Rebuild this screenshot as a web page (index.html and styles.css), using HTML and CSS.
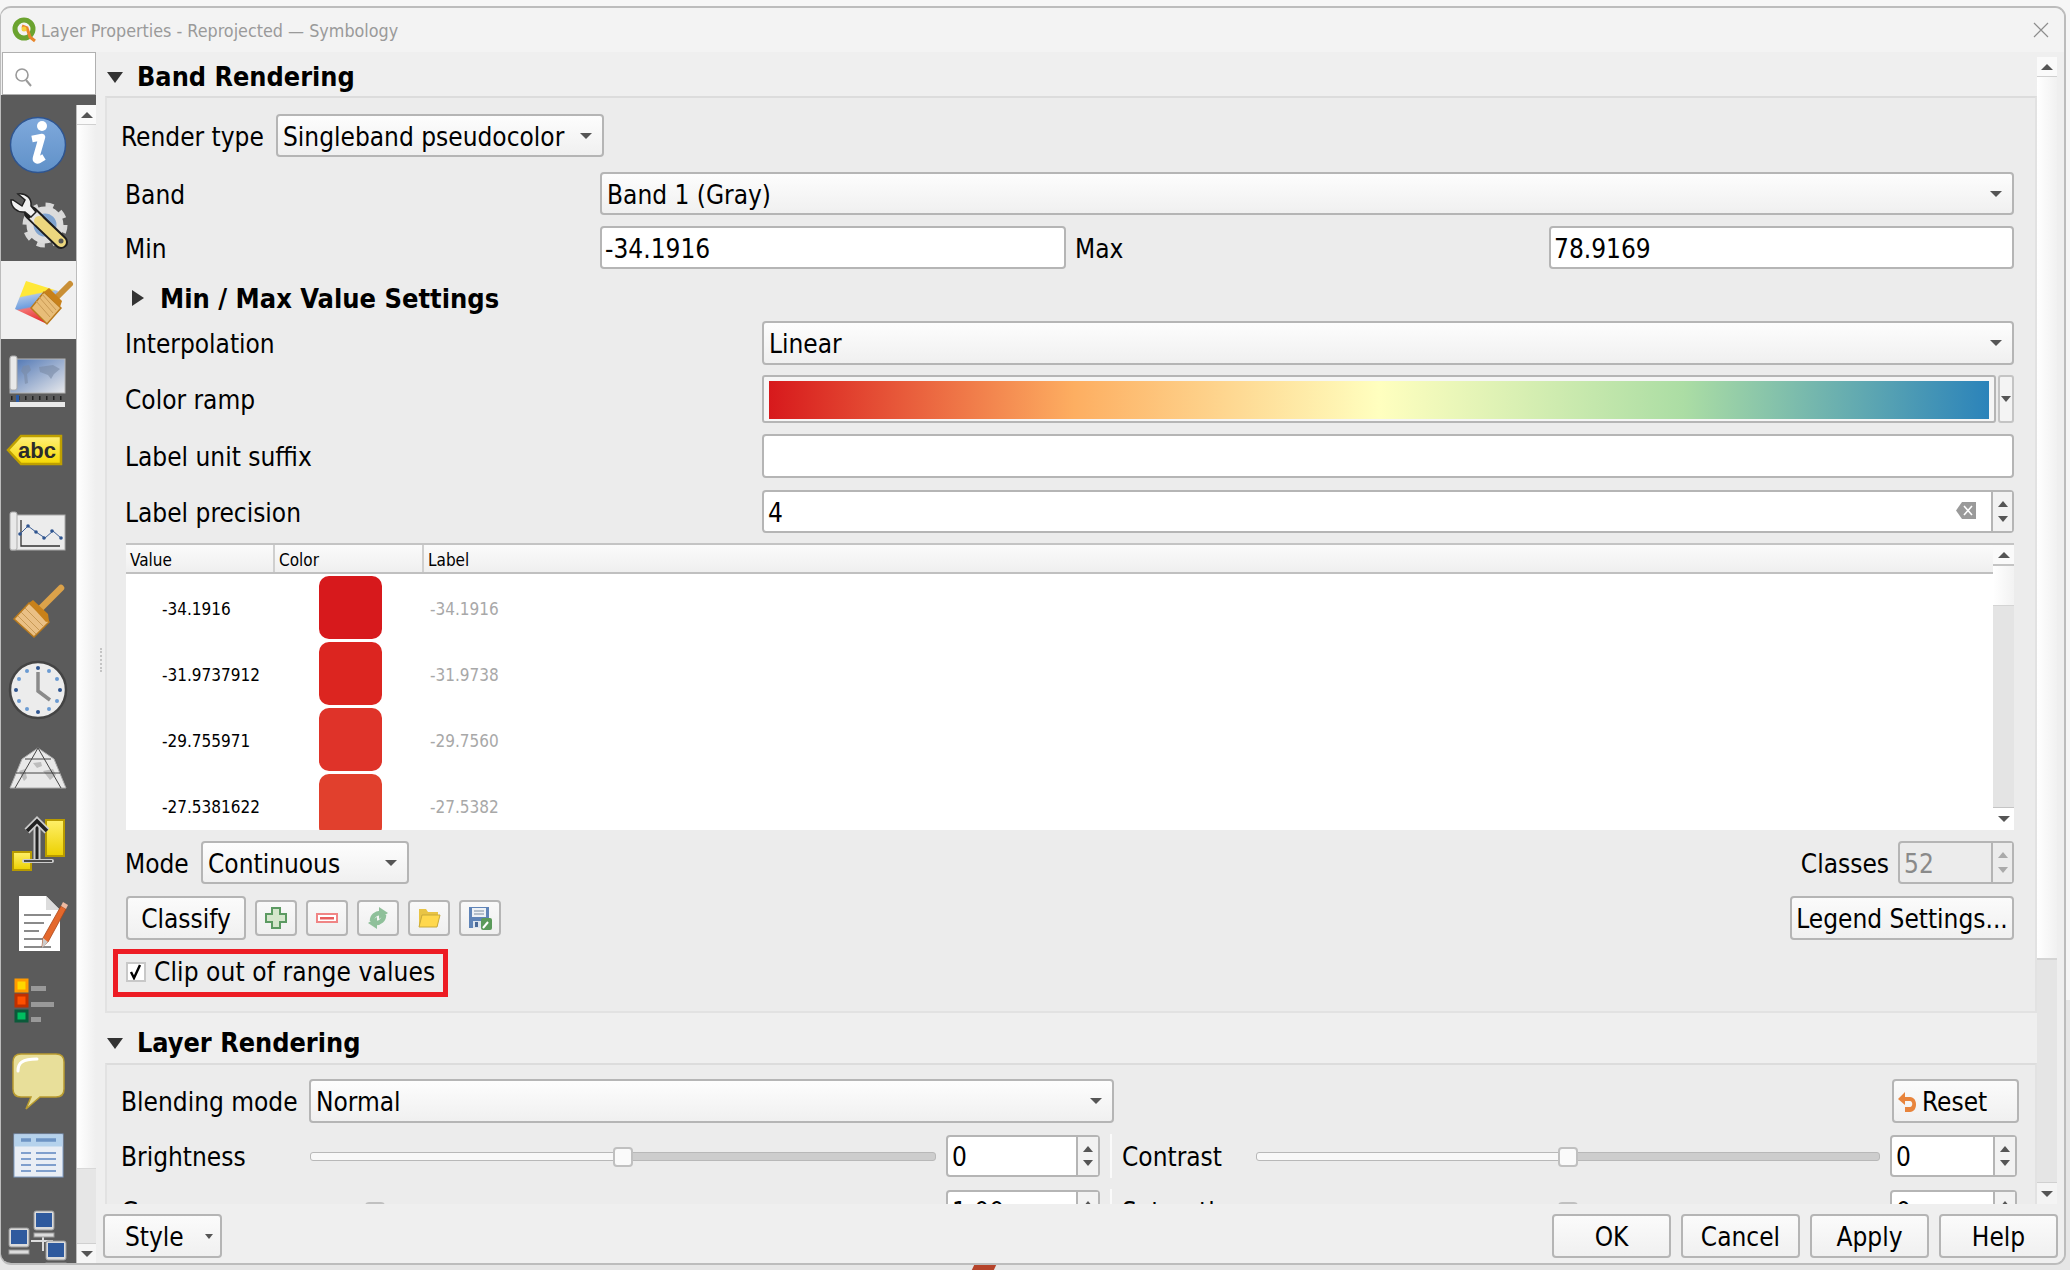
FILE: index.html
```html
<!DOCTYPE html>
<html lang="en">
<head>
    <meta charset="UTF-8">
    <title>Layer Properties - Reprojected — Symbology</title>
    <link rel="stylesheet" href="styles.css">
</head>
<body>
<div class="window">
    <div class="titlebar">
        <svg class="logo" width="26" height="26" viewBox="0 0 26 26">
            <circle cx="12" cy="12" r="9" fill="none" stroke="#6ba32f" stroke-width="5"/>
            <path d="M10 9l5 2 3 9 5 4" fill="none" stroke="#e8862c" stroke-width="3"/>
            <circle cx="12" cy="12" r="2.5" fill="#f4cf3a"/>
        </svg>
        <span class="title-text">Layer Properties - Reprojected — Symbology</span>
        <svg class="close" width="16" height="16" viewBox="0 0 16 16"><path d="M1 1l14 14M15 1L1 15" stroke="#8d8d8d" stroke-width="1.2"/></svg>
    </div>
    <div class="body">
        <div class="sidebar">
            <div class="search">
                <svg width="20" height="22" viewBox="0 0 20 22"><circle cx="8" cy="9" r="6" fill="none" stroke="#9a9a9a" stroke-width="1.6"/><path d="M12 14l5 6" stroke="#9a9a9a" stroke-width="2"/></svg>
            </div>
            <div class="dark-strip"></div>
            <div class="side-row">
                <div class="icons">
                    <div class="side-item">
                        <svg width="75" height="78" viewBox="0 0 75 78">
                            <defs><linearGradient id="infoBlue" x1="0" y1="0" x2="0" y2="1"><stop offset="0" stop-color="#7fa9dc"/><stop offset="1" stop-color="#6091c8"/></linearGradient></defs>
                            <circle cx="37" cy="40" r="27.5" fill="url(#infoBlue)" stroke="#2f5590" stroke-width="1.5"/>
                            <circle cx="41" cy="21" r="5" fill="#fff"/>
                            <path d="M31 34l10-2-6 21c-.5 2 1 3 3 2l5-3" fill="none" stroke="#fff" stroke-width="6.5" stroke-linejoin="round"/>
                        </svg>
                    </div>
                    <div class="side-item">
                        <svg width="75" height="78" viewBox="0 0 75 78">
                            <circle cx="44" cy="42" r="20" fill="none" stroke="#d8d8d8" stroke-width="5" stroke-dasharray="8 7.7"/>
                            <circle cx="44" cy="42" r="15" fill="#7fa3cf" stroke="#dcdcdc" stroke-width="7"/>
                            <path d="M30 30L60 59" stroke="#1e1e1e" stroke-width="14" stroke-linecap="round"/>
                            <path d="M32 32L38 38" stroke="#e6e6e6" stroke-width="10"/>
                            <path d="M38 38L60 59" stroke="#ecd77e" stroke-width="10" stroke-linecap="round"/>
                            <path d="M10 17c0 7 6 13 14 12l6 5 5-5-5-6c1-8-5-13-13-12l7 6-3 6-9-6z" fill="#f2f2f2" stroke="#222" stroke-width="1.5"/>
                            <circle cx="60" cy="58" r="2.5" fill="#555"/>
                        </svg>
                    </div>
                    <div class="side-item side-active">
                        <svg width="75" height="78" viewBox="0 0 75 78">
                            <defs><linearGradient id="flagBands" x1="0.2" y1="0" x2="0.4" y2="1"><stop offset="0" stop-color="#ffe838"/><stop offset="0.33" stop-color="#ffe838"/><stop offset="0.36" stop-color="#a9c3e6"/><stop offset="0.6" stop-color="#6f9fe0"/><stop offset="0.64" stop-color="#f47272"/><stop offset="1" stop-color="#e42a2a"/></linearGradient></defs>
                            <path d="M25 20l32 10-11 33-32-15z" fill="url(#flagBands)"/>
                            <path d="M50 42L69 23" stroke="#c98f36" stroke-width="6" stroke-linecap="round"/>
                            <path d="M30 47l13-16 17 16-14 16z" fill="#e8bd78" stroke="#b97a1c" stroke-width="1.5"/>
                            <path d="M38 36l14 16M35 40l14 16M41 33l14 16" stroke="#c89a55"/>
                            <path d="M43 31l5-4 13 13-2 6z" fill="#c8811a"/>
                        </svg>
                    </div>
                    <div class="side-item">
                        <svg width="75" height="78" viewBox="0 0 75 78">
                            <defs><linearGradient id="mapFill" x1="0" y1="0" x2="1" y2="1"><stop offset="0" stop-color="#4a72b2"/><stop offset="1" stop-color="#e8e9ec"/></linearGradient></defs>
                            <rect x="9" y="20" width="55" height="34" fill="url(#mapFill)" stroke="#b5b5b5"/>
                            <path d="M22 27l6-1 2 5-4 4 1 9-3 1-1-9-3-4zM38 28l14-2 7 4-6 5-3 5-3-4-8-3z" fill="#7a8aa5" opacity=".6"/>
                            <rect x="9" y="17" width="7" height="34" rx="2" fill="#e9e9e9" stroke="#aaa"/>
                            <path d="M10 59h54" stroke="#222" stroke-width="4" stroke-dasharray="1.5 5.5"/>
                            <rect x="15" y="56" width="3" height="8" fill="#2a5ba8"/>
                            <rect x="9" y="63" width="55" height="5" fill="#e9e9e9"/>
                        </svg>
                    </div>
                    <div class="side-item">
                        <svg width="75" height="78" viewBox="0 0 75 78">
                            <defs><linearGradient id="abcFill" x1="0" y1="0" x2="0" y2="1"><stop offset="0" stop-color="#fff07a"/><stop offset="1" stop-color="#f5d800"/></linearGradient></defs>
                            <path d="M7 33l13-14h40v28H20z" fill="url(#abcFill)" stroke="#bfa000" stroke-width="2.5"/>
                            <text x="17" y="41" class="abc-text">abc</text>
                        </svg>
                    </div>
                    <div class="side-item">
                        <svg width="75" height="78" viewBox="0 0 75 78">
                            <rect x="10" y="20" width="54" height="35" fill="#ececec" stroke="#aaa"/>
                            <rect x="9" y="17" width="7" height="38" rx="2" fill="#e9e9e9" stroke="#aaa"/>
                            <path d="M20 25v26h39" fill="none" stroke="#333" stroke-width="1.3"/>
                            <path d="M19 39l8-8 8 6 9 6 8-7 8 7" fill="none" stroke="#3d5f96" stroke-width="1"/>
                            <g fill="#2f5590"><circle cx="19" cy="39" r="1.8"/><circle cx="27" cy="31" r="1.8"/><circle cx="35" cy="37" r="1.8"/><circle cx="43" cy="43" r="1.8"/><circle cx="51" cy="36" r="1.8"/><circle cx="60" cy="43" r="1.8"/></g>
                        </svg>
                    </div>
                    <div class="side-item">
                        <svg width="75" height="78" viewBox="0 0 75 78">
                            <path d="M39 36L60 15" stroke="#dba24a" stroke-width="6.5" stroke-linecap="round"/>
                            <path d="M13 46l15-16 20 19-15 15z" fill="#eac085" stroke="#b97a1c" stroke-width="1.5"/>
                            <path d="M20 39l18 18M24 35l18 18M17 43l18 18" stroke="#c89a55"/>
                            <path d="M28 30l4-3 15 14 1 7-3 1z" fill="#c8811a"/>
                        </svg>
                    </div>
                    <div class="side-item">
                        <svg width="75" height="78" viewBox="0 0 75 78">
                            <circle cx="37" cy="39" r="28" fill="#ececec" stroke="#444" stroke-width="2.5"/>
                            <g fill="#2f5590"><circle cx="37" cy="17" r="2"/><circle cx="37" cy="61" r="2"/><circle cx="15" cy="39" r="2"/><circle cx="59" cy="39" r="2"/></g>
                            <g fill="#6b9bd2"><circle cx="48" cy="20" r="2"/><circle cx="26" cy="20" r="2"/><circle cx="56" cy="28" r="2"/><circle cx="18" cy="28" r="2"/><circle cx="56" cy="50" r="2"/><circle cx="18" cy="50" r="2"/><circle cx="48" cy="58" r="2"/><circle cx="26" cy="58" r="2"/></g>
                            <path d="M37 21v19l12 9" fill="none" stroke="#8a8a8a" stroke-width="3.5"/>
                        </svg>
                    </div>
                    <div class="side-item">
                        <svg width="75" height="78" viewBox="0 0 75 78">
                            <path d="M9 59L21 30 37 19l16 11 12 29z" fill="#e9e9e9" stroke="#aaa"/>
                            <path d="M18 42l6-2 2 9-3 3zM32 34l8-1 1 4-5 2zM42 42l10-2 3 6-6 5z" fill="#bdbdbd"/>
                            <path d="M37 19L14 59M37 19l23 40M24 30h26M15 44h44" fill="none" stroke="#444" stroke-width="1"/>
                        </svg>
                    </div>
                    <div class="side-item">
                        <svg width="75" height="78" viewBox="0 0 75 78">
                            <defs><linearGradient id="yellowBox" x1="0" y1="0" x2="0" y2="1"><stop offset="0" stop-color="#fff06a"/><stop offset="1" stop-color="#ecd000"/></linearGradient></defs>
                            <rect x="45" y="13" width="18" height="36" fill="url(#yellowBox)" stroke="#b89b00" stroke-width="2"/>
                            <rect x="12" y="45" width="18" height="18" fill="url(#yellowBox)" stroke="#b89b00" stroke-width="2"/>
                            <path d="M36 52V14" stroke="#ccc" stroke-width="7"/>
                            <path d="M36 52V14" stroke="#222" stroke-width="3"/>
                            <path d="M26 24l10-10 10 10" fill="none" stroke="#ccc" stroke-width="7"/>
                            <path d="M26 24l10-10 10 10" fill="none" stroke="#222" stroke-width="3.5"/>
                            <path d="M23 54h28" stroke="#ccc" stroke-width="4" stroke-linecap="round"/>
                            <path d="M23 54h28" stroke="#222" stroke-width="1.5"/>
                        </svg>
                    </div>
                    <div class="side-item">
                        <svg width="75" height="78" viewBox="0 -2 75 78">
                            <path d="M18 9h27l14 14v41H18z" fill="#fff"/>
                            <path d="M45 9v14h14z" fill="#dcdcdc"/>
                            <path d="M23 28h27M23 36h20M23 44h15M23 52h24M23 60h27" stroke="#8a8a8a" stroke-width="1.8"/>
                            <path d="M42 51L60 19l5 3-18 33-6 5z" fill="#e4682c" stroke="#a9481a" stroke-width=".8"/>
                            <path d="M60 19l2-4 5 3-2 4z" fill="#eeb9a0"/>
                            <path d="M42 51l5 4-6 6z" fill="#ccc"/>
                        </svg>
                    </div>
                    <div class="side-item">
                        <svg width="75" height="78" viewBox="0 -2 75 78">
                            <rect x="15" y="15" width="11" height="11" fill="#ffd800" stroke="#ff9a00" stroke-width="3"/>
                            <rect x="15" y="30" width="11" height="11" fill="#ff5000" stroke="#c03000" stroke-width="3"/>
                            <rect x="15" y="46" width="11" height="10" fill="#00c060" stroke="#0b5a3a" stroke-width="3"/>
                            <rect x="30" y="21" width="15" height="5" fill="#999"/>
                            <rect x="30" y="37" width="23" height="5" fill="#999"/>
                            <rect x="30" y="52" width="10" height="5" fill="#999"/>
                        </svg>
                    </div>
                    <div class="side-item">
                        <svg width="75" height="78" viewBox="0 -3 75 78">
                            <path d="M20 10h35c5 0 8 3 8 8v27c0 5-3 8-8 8H39l-14 12 5-12H20c-5 0-8-3-8-8V18c0-5 3-8 8-8z" fill="#e8df9a" stroke="#b89b30" stroke-width="1.5"/>
                            <path d="M17 27c0-8 4-12 19-12" fill="none" stroke="#fff" stroke-width="3" stroke-linecap="round"/>
                        </svg>
                    </div>
                    <div class="side-item">
                        <svg width="75" height="78" viewBox="0 -4 75 78">
                            <rect x="13" y="11" width="49" height="43" fill="#e9eef5" stroke="#7e9cc4"/>
                            <rect x="13.5" y="11.5" width="48" height="12" fill="#b5d2ec"/>
                            <path d="M20 17h10M35 17h20" stroke="#6d94c4" stroke-width="3.5"/>
                            <path d="M20 30h10M35 30h20M20 36h10M35 36h20M20 42h10M35 42h20M20 48h10M35 48h20" stroke="#7f9fcd" stroke-width="2"/>
                        </svg>
                    </div>
                    <div class="side-item">
                        <svg width="75" height="78" viewBox="0 -6 75 78">
                            <path d="M42 30v18M30 38h22" stroke="#ddd" stroke-width="2"/>
                            <g fill="#dcdcdc" stroke="#999">
                                <rect x="33" y="8" width="20" height="19" rx="2"/><rect x="8" y="25" width="20" height="19" rx="2"/><rect x="45" y="38" width="20" height="19" rx="2"/>
                                <rect x="33" y="30" width="20" height="4"/><rect x="8" y="47" width="20" height="4"/><rect x="45" y="60" width="20" height="5"/>
                            </g>
                            <g fill="#2f5a9e"><rect x="35" y="10" width="16" height="14"/><rect x="10" y="27" width="16" height="14"/><rect x="47" y="40" width="16" height="14"/></g>
                        </svg>
                    </div>
                </div>
                <div class="side-scroll">
                    <div class="arrow-btn side-btn"><span class="tri-up"></span></div>
                    <div class="side-thumb"></div>
                    <div class="side-track"></div>
                    <div class="arrow-btn side-btn side-btn-down"><span class="tri-down"></span></div>
                </div>
            </div>
        </div>

        <div class="main">
            <div class="scroll">
                <div class="splitter"></div>
                <div class="content">
                    <div class="group-head"><span class="tri-down big"></span><span>Band Rendering</span></div>
                    <div class="frame">
                        <div class="row r-render">
                            <span class="lbl w-render">Render type</span>
                            <div class="combo w-combo-render">Singleband pseudocolor<span class="tri-down"></span></div>
                        </div>
                        <div class="row r-band inset">
                            <span class="lbl w-474">Band</span>
                            <div class="combo grow">Band 1 (Gray)<span class="tri-down"></span></div>
                        </div>
                        <div class="row r-min inset">
                            <span class="lbl w-474">Min</span>
                            <div class="input w-465">-34.1916</div>
                            <span class="lbl w-max">Max</span>
                            <div class="input grow">78.9169</div>
                        </div>
                        <div class="sub-head"><span class="tri-right"></span><span>Min / Max Value Settings</span></div>
                        <div class="row r-interp inset">
                            <span class="lbl w-636">Interpolation</span>
                            <div class="combo grow">Linear<span class="tri-down"></span></div>
                        </div>
                        <div class="row r-ramp inset">
                            <span class="lbl w-636">Color ramp</span>
                            <div class="ramp"><div class="ramp-fill"></div></div>
                            <div class="ramp-btn"><span class="tri-down"></span></div>
                        </div>
                        <div class="row r-suffix inset">
                            <span class="lbl w-636">Label unit suffix</span>
                            <div class="input grow"></div>
                        </div>
                        <div class="row r-prec inset">
                            <span class="lbl w-636">Label precision</span>
                            <div class="input grow has-spin">4
                                <svg class="clear" width="20" height="17" viewBox="0 0 20 17"><path d="M0 8.5L6 0h14v17H6z" fill="#9a9a9a"/><path d="M8 4l8 9M16 4l-8 9" stroke="#fff" stroke-width="1.6"/></svg>
                                <div class="spin-btns"><span class="tri-up"></span><span class="tri-down"></span></div>
                            </div>
                        </div>
                        <div class="table inset-m">
                            <div class="table-main">
                                <div class="thead">
                                    <div class="th">Value</div>
                                    <div class="th">Color</div>
                                    <div class="th th-last">Label</div>
                                </div>
                                <div class="tbody">
                                    <div class="tr"><span class="td-val">-34.1916</span><span class="td-col"><span class="swatch c1"></span></span><span class="td-lab">-34.1916</span></div>
                                    <div class="tr"><span class="td-val">-31.9737912</span><span class="td-col"><span class="swatch c2"></span></span><span class="td-lab">-31.9738</span></div>
                                    <div class="tr"><span class="td-val">-29.755971</span><span class="td-col"><span class="swatch c3"></span></span><span class="td-lab">-29.7560</span></div>
                                    <div class="tr"><span class="td-val">-27.5381622</span><span class="td-col"><span class="swatch c4"></span></span><span class="td-lab">-27.5382</span></div>
                                </div>
                            </div>
                            <div class="table-scroll">
                                <div class="arrow-btn t-up"><span class="tri-up"></span></div>
                                <div class="t-thumb"></div>
                                <div class="t-track"></div>
                                <div class="arrow-btn t-down"><span class="tri-down"></span></div>
                            </div>
                        </div>
                        <div class="row r-mode inset">
                            <span class="lbl w-mode">Mode</span>
                            <div class="combo w-combo-mode">Continuous<span class="tri-down"></span></div>
                            <span class="lbl classes-lbl">Classes</span>
                            <div class="input disabled w-classes">52
                                <div class="spin-btns"><span class="tri-up"></span><span class="tri-down"></span></div>
                            </div>
                        </div>
                        <div class="row r-classify inset">
                            <button class="btn w-classify">Classify</button>
                            <button class="tool-btn">
                                <svg width="24" height="24" viewBox="0 0 24 24"><path d="M8 2h8v6h6v8h-6v6H8v-6H2V8h6z" fill="#d5e6cc" stroke="#5c9a62" stroke-width="2"/></svg>
                            </button>
                            <button class="tool-btn">
                                <svg width="24" height="24" viewBox="0 0 24 24"><rect x="2" y="8" width="20" height="8" fill="#fff" stroke="#f08585" stroke-width="2"/><rect x="5" y="11" width="14" height="2.5" fill="#e85d5d"/></svg>
                            </button>
                            <button class="tool-btn">
                                <svg width="24" height="24" viewBox="0 0 24 24"><path d="M6 15C6 10 10 7 14 7" fill="none" stroke="#8fc09a" stroke-width="4.5"/><path d="M13 1l9 6-9 6z" fill="#8fc09a"/><path d="M18 9c0 5-4 8-8 8" fill="none" stroke="#8fc09a" stroke-width="4.5"/><path d="M11 11l-9 6 9 6z" fill="#8fc09a"/></svg>
                            </button>
                            <button class="tool-btn">
                                <svg width="24" height="24" viewBox="0 0 24 24"><path d="M2 3h7l2 3h10v14H2z" fill="#e9c445"/><path d="M5 9h18l-3 12H2z" fill="#ffd84d" stroke="#c8a93a"/></svg>
                            </button>
                            <button class="tool-btn">
                                <svg width="24" height="24" viewBox="0 0 24 24"><path d="M1 1h20v21H1z" fill="#5f84b8"/><rect x="4" y="2" width="14" height="9" fill="#eef2f6"/><path d="M6 5h10M6 8h10" stroke="#7a8ca0"/><rect x="5" y="15" width="10" height="7" fill="#dce4ee"/><rect x="7" y="16" width="3" height="5" fill="#4a6a98"/><rect x="13" y="12" width="11" height="12" rx="2" fill="#5a9a5a"/><path d="M15 22l5-6" stroke="#fff" stroke-width="2"/></svg>
                            </button>
                            <button class="btn w-legend">Legend Settings...</button>
                        </div>
                        <div class="clip-box">
                            <span class="check">
                                <svg width="16" height="16" viewBox="0 0 16 16"><path d="M3 8l3 6 6-13" fill="none" stroke="#000" stroke-width="2.4"/></svg>
                            </span>
                            <span class="clip-text">Clip out of range values</span>
                        </div>
                    </div>

                    <div class="group-head head2"><span class="tri-down big"></span><span>Layer Rendering</span></div>
                    <div class="frame frame2">
                        <div class="row r-blend">
                            <span class="lbl w-blend">Blending mode</span>
                            <div class="combo w-combo-blend">Normal<span class="tri-down"></span></div>
                            <button class="btn w-reset">
                                <svg width="20" height="22" viewBox="0 0 20 22"><path d="M8 1L1 8l7 6v-4h5c3 0 3 6 0 6H8v5h5c8 0 8-15 0-15H8z" fill="#e8843c"/></svg>
                                <span>Reset</span>
                            </button>
                        </div>
                        <div class="row r-slide">
                            <span class="lbl w-slide-lbl">Brightness</span>
                            <div class="slider w-slider1"><span class="handle"></span></div>
                            <div class="input w-spin1 has-spin small-spin">0<div class="spin-btns"><span class="tri-up"></span><span class="tri-down"></span></div></div>
                            <div class="sep"></div>
                            <span class="lbl w-contrast">Contrast</span>
                            <div class="slider w-slider2"><span class="handle"></span></div>
                            <div class="input w-spin2 has-spin small-spin">0<div class="spin-btns"><span class="tri-up"></span><span class="tri-down"></span></div></div>
                        </div>
                        <div class="row r-slide r-slide3">
                            <span class="lbl w-slide-lbl">Gamma</span>
                            <div class="slider w-slider1 slider-gamma"><span class="handle"></span></div>
                            <div class="input w-spin1 has-spin small-spin">1.00<div class="spin-btns"><span class="tri-up"></span><span class="tri-down"></span></div></div>
                            <div class="sep"></div>
                            <span class="lbl w-contrast">Saturation</span>
                            <div class="slider w-slider2"><span class="handle"></span></div>
                            <div class="input w-spin2 has-spin small-spin">0<div class="spin-btns"><span class="tri-up"></span><span class="tri-down"></span></div></div>
                        </div>
                    </div>
                </div>
                <div class="main-scroll">
                    <div class="arrow-btn m-up"><span class="tri-up"></span></div>
                    <div class="m-thumb"></div>
                    <div class="m-track"></div>
                    <div class="arrow-btn m-down"><span class="tri-down"></span></div>
                </div>
            </div>
            <div class="footer">
                <button class="btn w-foot style-btn">Style<span class="tri-down"></span></button>
                <div class="foot-right">
                    <button class="btn w-foot">OK</button>
                    <button class="btn w-foot">Cancel</button>
                    <button class="btn w-foot">Apply</button>
                    <button class="btn w-foot">Help</button>
                </div>
            </div>
        </div>
    </div>
</div>
<div class="below"></div>
</body>
</html>
```

FILE: styles.css
```css
html, body {
    margin: 0;
    height: 1270px;
    overflow: hidden;
}
body {
    font-family: "DejaVu Sans Condensed", "DejaVu Sans", sans-serif;
    font-stretch: condensed;
    font-size: 26px;
    color: #000;
    background: linear-gradient(#f6f6f6 0, #f6f6f6 1000px, #e6e6e6 1000px);
    padding-top: 6px;
    box-sizing: border-box;
}
.window {
    width: 2066px;
    height: 1259px;
    box-sizing: border-box;
    border: 2px solid #bcbcbc;
    border-left-width: 1px;
    border-radius: 11px;
    background: #efefef;
    overflow: hidden;
    display: flex;
    flex-direction: column;
}
.below {
    width: 22px;
    height: 5px;
    margin-left: 973px;
    background: #b5432a;
    transform: skewX(-25deg);
}

/* title bar */
.titlebar {
    height: 44px;
    display: flex;
    align-items: center;
    background: #f3f3f3;
    padding: 0 12px 0 11px;
}
.logo { margin-right: 3px; }
.title-text {
    color: #9a9a9a;
    font-size: 17.8px;
}
.close { margin-left: auto; margin-right: 3px; }

.body {
    flex: 1;
    display: flex;
    min-height: 0;
}

/* left list */
.sidebar {
    width: 95px;
    display: flex;
    flex-direction: column;
    flex-shrink: 0;
}
.search {
    height: 43px;
    box-sizing: border-box;
    margin-left: 1px;
    background: #fff;
    border: 1px solid #b0b0b0;
    padding: 11px 0 0 11px;
}
.dark-strip {
    height: 10px;
    background: #5b5b5b;
}
.side-row {
    flex: 1;
    display: flex;
    min-height: 0;
}
.icons {
    width: 75px;
    background: #5b5b5b;
    border-right: 1px solid #bdbdbd;
    overflow: hidden;
}
.side-item { height: 78px; }
.side-item svg { display: block; }
.side-active { background: #f0f0f0; }
.abc-text {
    font-family: "Liberation Sans", sans-serif;
    font-size: 22px;
    font-weight: bold;
    fill: #2b2b2b;
}
.side-scroll {
    flex: 1;
    display: flex;
    flex-direction: column;
}
.arrow-btn {
    display: flex;
    align-items: center;
    justify-content: center;
    background: #fafafa;
    flex-shrink: 0;
}
.side-btn {
    height: 19px;
    border-bottom: 1px solid #d0d0d0;
}
.side-btn-down {
    border-bottom: 0;
    border-top: 1px solid #d0d0d0;
    background: #f6f6f6;
}
.side-thumb {
    height: 1043px;
    background: linear-gradient(90deg, #fff, #efefef);
}
.side-track {
    flex: 1;
    background: #e6e6e6;
    border-top: 1px solid #d8d8d8;
}

/* triangles */
.tri-down, .tri-up {
    display: inline-block;
    width: 0;
    height: 0;
    border-left: 6px solid transparent;
    border-right: 6px solid transparent;
}
.tri-down { border-top: 6px solid #555; }
.tri-up { border-bottom: 6px solid #555; }
.tri-down.big {
    border-left-width: 8px;
    border-right-width: 8px;
    border-top: 11px solid #333;
}
.tri-right {
    display: inline-block;
    width: 0;
    height: 0;
    border-top: 8.5px solid transparent;
    border-bottom: 8.5px solid transparent;
    border-left: 12px solid #333;
}

/* main area */
.main {
    flex: 1;
    display: flex;
    flex-direction: column;
    min-width: 0;
}
.scroll {
    height: 1152px;
    display: flex;
    overflow: hidden;
}
.splitter {
    width: 9px;
    flex-shrink: 0;
    margin-top: 596px;
    height: 24px;
    box-sizing: border-box;
    border-left: 2px dotted #c4c4c4;
    margin-left: 0;
    transform: translateX(4px);
}
.content {
    width: 1932px;
    flex-shrink: 0;
    overflow: hidden;
}
.group-head {
    height: 44px;
    box-sizing: border-box;
    padding-top: 4px;
    display: flex;
    align-items: center;
    font-size: 26.8px;
    font-weight: bold;
}
.group-head .tri-down { margin: 2px 14px 0 2px; }
.head2 {
    height: 50px;
    padding-top: 9px;
}
.frame {
    background: #ececec;
    border-top: 2px solid #dcdcdc;
    border-left: 2px solid #e2e2e2;
    border-bottom: 2px solid #e2e2e2;
    border-right: 2px solid #e2e2e2;
    height: 917px;
    box-sizing: border-box;
    padding: 0 21px 0 15px;
}
.frame2 {
    height: 200px;
    padding-right: 16px;
}

.row {
    display: flex;
    align-items: center;
}
.row > .lbl:first-child { margin: 0 1px 0 -1px; }
.inset { padding-left: 4px; }
.inset-m { margin-left: 4px; }
.lbl { flex-shrink: 0; padding-top: 2px; }
.grow { flex: 1; }

.w-render { width: 154px; }
.w-474 { width: 474px; }
.w-465 { width: 466px; }
.w-max { width: 483px; padding-left: 9px; box-sizing: border-box; }
.w-636 { width: 636px; }
.w-combo-render { width: 328px; }

.r-render { height: 43px; margin-top: 16px; }
.r-band { height: 43px; margin-top: 15px; }
.r-min { height: 43px; margin-top: 11px; }
.r-interp { height: 44px; }
.r-ramp { height: 48px; margin-top: 10px; }
.r-suffix { height: 44px; margin-top: 11px; }
.r-prec { height: 43px; margin-top: 12px; }

.combo, .input, .btn, .tool-btn {
    box-sizing: border-box;
    border: 2px solid #b5b5b5;
    border-radius: 4px;
    font: inherit;
    color: #000;
}
.combo {
    height: 100%;
    position: relative;
    display: flex;
    align-items: center;
    padding: 2px 0 0 5px;
    background: linear-gradient(#fdfdfd, #f0f0f0);
}
.combo .tri-down {
    position: absolute;
    right: 10px;
    top: 17px;
}
.input {
    height: 100%;
    position: relative;
    display: flex;
    align-items: center;
    padding: 2px 0 0 3px;
    background: #fff;
}
.sub-head {
    height: 52px;
    box-sizing: border-box;
    padding: 6px 0 0 10px;
    display: flex;
    align-items: center;
    font-size: 27px;
    font-weight: bold;
}
.sub-head .tri-right { margin-right: 16px; }

.ramp {
    flex: 1;
    height: 100%;
    box-sizing: border-box;
    padding: 4px 5px 2px 5px;
    background: #f6f6f6;
    border: 2px solid #b5b5b5;
    border-radius: 3px;
}
.ramp-fill {
    height: 100%;
    background: linear-gradient(90deg, #d7191c, #fdae61 25%, #ffffbf 50%, #abdda4 75%, #2b83ba);
}
.ramp-btn {
    width: 16px;
    height: 100%;
    box-sizing: border-box;
    margin-left: 2px;
    border: 2px solid #c4c4c4;
    border-radius: 3px;
    background: #f4f4f4;
    display: flex;
    align-items: center;
    justify-content: center;
}
.ramp-btn .tri-down {
    border-left-width: 5px;
    border-right-width: 5px;
}

.has-spin { padding-left: 4px; }
.clear {
    position: absolute;
    right: 36px;
    top: 10px;
}
.spin-btns {
    position: absolute;
    top: 0;
    right: 0;
    bottom: 0;
    width: 21px;
    box-sizing: border-box;
    border-left: 2px solid #b5b5b5;
    background: #f2f2f2;
    display: flex;
    flex-direction: column;
    align-items: center;
    justify-content: space-evenly;
}
.spin-btns .tri-up, .spin-btns .tri-down {
    border-left-width: 5.5px;
    border-right-width: 5.5px;
}

/* classes table */
.table {
    height: 287px;
    margin-top: 10px;
    display: flex;
    background: #fff;
    border-top: 2px solid #c4c4c4;
    box-sizing: border-box;
}
.table-main {
    flex: 1;
    overflow: hidden;
}
.thead {
    height: 27px;
    display: flex;
    background: linear-gradient(#fbfbfb, #efefef);
    border-bottom: 2px solid #c0c0c0;
    font-size: 17px;
}
.th {
    width: 149px;
    box-sizing: border-box;
    padding-left: 4px;
    line-height: 31px;
    border-right: 2px solid #cfcfcf;
}
.th-last {
    flex: 1;
    border-right: 0;
}
.tbody {
    padding-top: 2px;
    font-size: 17px;
}
.tr {
    height: 66px;
    display: flex;
    align-items: center;
}
.td-val {
    width: 149px;
    box-sizing: border-box;
    padding-left: 36px;
}
.td-col {
    width: 149px;
    box-sizing: border-box;
    padding-left: 44px;
    height: 100%;
}
.td-lab {
    padding-left: 6px;
    color: #a8a8a8;
}
.swatch {
    display: block;
    width: 63px;
    height: 63px;
    border-radius: 10px;
}
.c1 { background: #d7191c; }
.c2 { background: #dc2520; }
.c3 { background: #df3329; }
.c4 { background: #e1402d; }
.table-scroll {
    width: 21px;
    display: flex;
    flex-direction: column;
    flex-shrink: 0;
}
.t-up {
    height: 19px;
    border-bottom: 2px solid #c4c4c4;
}
.t-thumb {
    height: 39px;
    background: linear-gradient(90deg, #fff, #f2f2f2);
}
.t-track {
    flex: 1;
    background: #e4e4e4;
    border-top: 1px solid #d4d4d4;
}
.t-down {
    height: 22px;
    border-top: 1px solid #c4c4c4;
    background: #fff;
}

.r-mode { height: 43px; margin-top: 11px; }
.w-mode { width: 75px; }
.w-combo-mode { width: 208px; }
.classes-lbl { margin-left: auto; margin-right: 9px; }
.w-classes { width: 116px; color: #8a8a8a; background: #ececec; padding-left: 4px; }
.w-classes .spin-btns { background: #ececec; }
.w-classes .tri-up { border-bottom-color: #aaa; }
.w-classes .tri-down { border-top-color: #aaa; }

.r-classify { height: 44px; margin-top: 12px; }
.btn {
    height: 100%;
    padding: 2px 0 0;
    background: linear-gradient(#fbfbfb, #f0f0f0);
    display: flex;
    align-items: center;
    justify-content: center;
}
.tool-btn {
    width: 42px;
    height: 36px;
    margin-left: 9px;
    padding: 0;
    background: linear-gradient(#f9f9f9, #efefef);
    display: flex;
    align-items: center;
    justify-content: center;
}
.w-classify { width: 120px; }
.w-legend { width: 224px; margin-left: auto; }

.clip-box {
    width: 335px;
    height: 48px;
    box-sizing: border-box;
    margin: 9px 0 0 -9px;
    border: 5px solid #ed1c24;
    display: flex;
    align-items: center;
    padding: 0 0 2px 8px;
}
.check {
    width: 20px;
    height: 20px;
    box-sizing: border-box;
    background: #fff;
    border: 2px solid #c8c8c8;
    margin-right: 8px;
    display: flex;
    align-items: center;
    justify-content: center;
}
.clip-text { white-space: nowrap; letter-spacing: .1px; }

/* layer rendering */
.r-blend { height: 44px; margin-top: 14px; }
.w-blend { width: 187px; }
.w-combo-blend { width: 805px; }
.w-reset { width: 127px; margin-left: auto; justify-content: flex-start; padding-left: 3px; gap: 5px; }
.r-slide { height: 42px; margin-top: 12px; }
.r-slide3 { margin-top: 13px; }
.w-slide-lbl { width: 188px; }
.slider {
    height: 9px;
    position: relative;
    box-sizing: border-box;
    border: 1px solid #b8b8b8;
    border-radius: 3px;
    background: linear-gradient(90deg, #f8f8f8 50%, #cdcdcd 50%);
    flex-shrink: 0;
}
.handle {
    position: absolute;
    left: 50%;
    top: -6px;
    width: 20px;
    height: 20px;
    margin-left: -10px;
    box-sizing: border-box;
    border: 2px solid #c0c0c0;
    border-radius: 4px;
    background: #fafafa;
}
.slider-gamma .handle { left: 10.2%; }
.w-slider1 { width: 626px; }
.w-slider2 { width: 624px; }
.w-spin1 { width: 154px; margin-left: 10px; }
.w-spin2 { width: 127px; margin-left: 10px; }
.small-spin .spin-btns { width: 22px; }
.sep {
    width: 2px;
    height: 44px;
    margin-left: 10px;
    background: #fafafa;
    flex-shrink: 0;
}
.w-contrast { width: 134px; margin-left: 10px; }

/* right scrollbar */
.main-scroll {
    width: 20px;
    margin-left: 0;
    margin-top: 5px;
    display: flex;
    flex-direction: column;
    flex-shrink: 0;
}
.m-up {
    height: 19px;
    border-bottom: 1px solid #d0d0d0;
    background: #fafafa;
}
.m-thumb {
    height: 881px;
    background: linear-gradient(90deg, #fff, #f1f1f1);
}
.m-track {
    flex: 1;
    background: #e5e5e5;
    border-top: 2px solid #d4d4d4;
}
.m-down {
    height: 21px;
    border-top: 1px solid #d0d0d0;
    background: #f4f4f4;
}

/* bottom buttons */
.footer {
    height: 59px;
    box-sizing: border-box;
    display: flex;
    padding: 10px 6px 5px 7px;
    background: #efefef;
}
.foot-right {
    margin-left: auto;
    display: flex;
    gap: 10px;
}
.w-foot { width: 119px; }
.style-btn {
    position: relative;
    justify-content: flex-start;
    padding-left: 20px;
}
.style-btn .tri-down {
    position: absolute;
    right: 7px;
    top: 18px;
    border-left-width: 4.5px;
    border-right-width: 4.5px;
    border-top-width: 5px;
}
```
